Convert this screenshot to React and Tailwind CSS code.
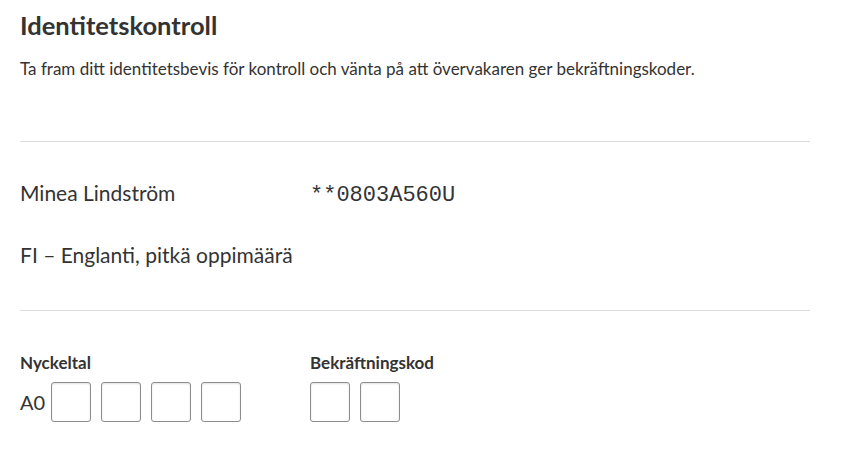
import React from 'react';

const codeBox = 'w-10 h-10 border border-[#8c8c8c] rounded-[3px] bg-white shadow-[inset_0_1px_2px_rgba(0,0,0,0.12)]';

function CodeInputs({ count }) {
  return (
    <div className="flex gap-[10px]">
      {Array.from({ length: count }).map((_, i) => (
        <input key={i} type="text" maxLength={1} className={codeBox} />
      ))}
    </div>
  );
}

export default function App() {
  return (
    <div className="bg-white text-[#333] px-5 w-[830px] font-['Lato','Noto_Sans',sans-serif]">
      <h1 className="text-[25.5px] font-bold leading-[30px] pt-[10px]">Identitetskontroll</h1>
      <p className="text-[17px] mt-[19px] leading-[20px]">
        Ta fram ditt identitetsbevis för kontroll och vänta på att övervakaren ger bekräftningskoder.
      </p>

      <hr className="border-0 border-t border-[#ddd] mt-[62px]" />

      <div className="grid grid-cols-[290px_1fr] items-baseline mt-[35px] text-[21px]">
        <span>Minea Lindström</span>
        <span className="font-['Liberation_Mono',monospace] text-[22px]">**0803A560U</span>
      </div>
      <div className="text-[21px] mt-[27px]">FI – Englanti, pitkä oppimäärä</div>

      <hr className="border-0 border-t border-[#ddd] mt-[39px]" />

      <div className="grid grid-cols-[290px_1fr] mt-[42px]">
        <div>
          <div className="text-[17px] font-bold leading-[20px] mb-[9px]">Nyckeltal</div>
          <div className="flex items-center gap-[6px]">
            <span className="text-[20px]">A0</span>
            <CodeInputs count={4} />
          </div>
        </div>
        <div>
          <div className="text-[17px] font-bold leading-[20px] mb-[9px]">Bekräftningskod</div>
          <CodeInputs count={2} />
        </div>
      </div>
    </div>
  );
}
